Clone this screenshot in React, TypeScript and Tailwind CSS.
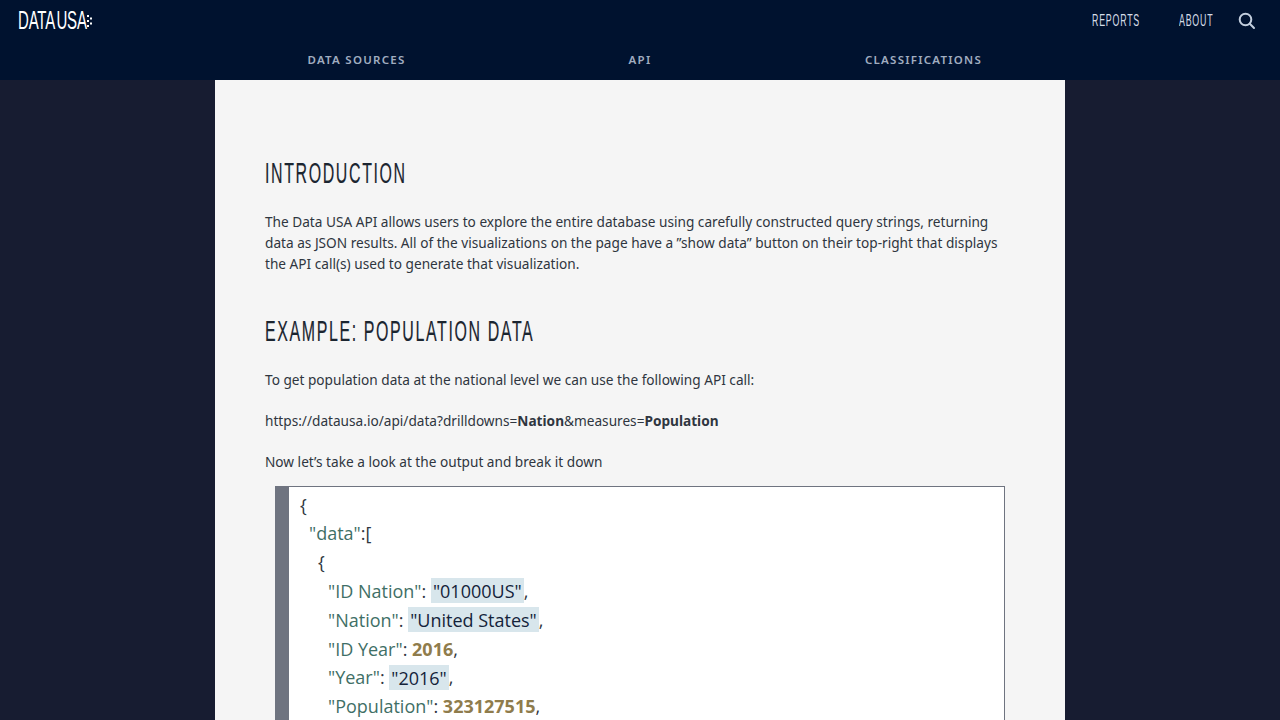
const sans = "font-['Noto_Sans',sans-serif]";
const gothic = "font-['Liberation_Sans',sans-serif]";

function Key({ children }: { children: string }) {
  return <span className="text-[#3f6f66]">{children}</span>;
}

function Str({ children }: { children: string }) {
  return <span className="bg-[#d8e6ec] text-[#14233a] px-[2px] py-[0.5px]">{children}</span>;
}

function Num({ children }: { children: string }) {
  return <span className="font-bold text-[#8f7c4c]">{children}</span>;
}

function Line({ indent, children }: { indent: string; children: React.ReactNode }) {
  return <div className={`h-[28.8px] leading-[28.8px] whitespace-pre ${indent}`}>{children}</div>;
}

function Heading({ children, className }: { children: string; className: string }) {
  return (
    <h2 className={`origin-left scale-x-[0.55] whitespace-nowrap text-[29px] font-normal leading-[40px] tracking-[2.95px] [-webkit-text-stroke:0.2px_#1b2530] text-[#1b2530] ${gothic} ${className}`}>
      {children}
    </h2>
  );
}

export default function App() {
  return (
    <div className={`h-[720px] overflow-hidden bg-[#171c31] ${sans}`}>
      {/* Header */}
      <header className="h-[80px] bg-[#00122f]">
        <div className="flex h-[41px] items-center justify-between pl-[18px] pr-[24px]">
          <div className="flex items-center">
            <div className="w-[70px]">
              <span className={`block origin-left scale-x-[0.6] whitespace-nowrap text-[25px] leading-none tracking-[-0.3px] [word-spacing:-3px] text-white ${gothic}`}>DATA USA</span>
            </div>
            <svg width="6" height="14" viewBox="0 0 6 14" className="ml-[-1px] mt-[1px]" fill="#ffffff">
              <rect x="0" y="1" width="2" height="2" />
              <rect x="3" y="3.5" width="2" height="2" />
              <rect x="0" y="6" width="2" height="2" />
              <rect x="3" y="8.5" width="2" height="2" />
              <rect x="0" y="11" width="2" height="2" />
            </svg>
          </div>
          <nav className={`flex items-center text-[17px] leading-none tracking-[1.5px] text-[#d5dde8] ${gothic}`}>
            <div className="w-[87px]">
              <a className="block origin-left scale-x-[0.52] whitespace-nowrap">REPORTS</a>
            </div>
            <div className="w-[59px]">
              <a className="block origin-left scale-x-[0.52] whitespace-nowrap">ABOUT</a>
            </div>
            <svg width="18" height="18" viewBox="0 0 18 18" fill="none" stroke="#c2cedd" strokeWidth="2" strokeLinecap="round">
              <circle cx="7.5" cy="7.5" r="5.8" />
              <path d="M11.8 11.8 L16 16" />
            </svg>
          </nav>
        </div>
        <div className="mx-auto flex h-[39px] w-[850px] items-start pt-[10px] text-[11.5px] font-semibold leading-[17px] tracking-[1.25px] text-[#a0adc0]">
          <a className="w-[283px] text-center">DATA SOURCES</a>
          <a className="w-[284px] text-center">API</a>
          <a className="w-[283px] text-center">CLASSIFICATIONS</a>
        </div>
      </header>

      {/* Content */}
      <main className="mx-auto h-[640px] w-[850px] overflow-hidden bg-[#f5f5f5] px-[50px] pt-[73px] text-[13.65px] leading-[21px] text-[#2f3640]">
        <Heading className="">INTRODUCTION</Heading>
        <p className="mt-[18px]">
          The Data USA API allows users to explore the entire database using carefully constructed query strings, returning data as JSON results. All of the visualizations on the page have a ”show data” button on their top-right that displays the API call(s) used to generate that visualization.
        </p>
        <Heading className="mt-[37px]">EXAMPLE: POPULATION DATA</Heading>
        <p className="mt-[18px]">To get population data at the national level we can use the following API call:</p>
        <p className="mt-[20px]">
          https://datausa.io/api/data?drilldowns=<b>Nation</b>&amp;measures=<b>Population</b>
        </p>
        <p className="mt-[20px]">Now let’s take a look at the output and break it down</p>
        <div className="ml-[10px] mr-[10px] mt-[14px] border border-l-[14px] border-[#6f7480] bg-white pl-[11px] pt-[3.6px] font-['Open_Sans',sans-serif] text-[18px] text-[#2f3640]">
          <Line indent="">{'{'}</Line>
          <Line indent="pl-[9px]"><Key>"data"</Key>:[</Line>
          <Line indent="pl-[18px]">{'{'}</Line>
          <Line indent="pl-[28px]"><Key>"ID Nation"</Key>: <Str>"01000US"</Str>,</Line>
          <Line indent="pl-[28px]"><Key>"Nation"</Key>: <Str>"United States"</Str>,</Line>
          <Line indent="pl-[28px]"><Key>"ID Year"</Key>: <Num>2016</Num>,</Line>
          <Line indent="pl-[28px]"><Key>"Year"</Key>: <Str>"2016"</Str>,</Line>
          <Line indent="pl-[28px]"><Key>"Population"</Key>: <Num>323127515</Num>,</Line>
        </div>
      </main>
    </div>
  );
}
